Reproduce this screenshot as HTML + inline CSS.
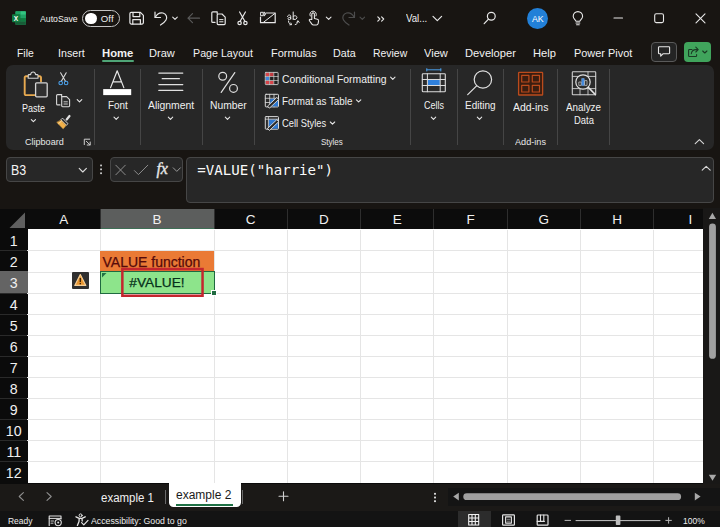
<!DOCTYPE html>
<html lang="en">
<head>
<meta charset="utf-8">
<title>Excel</title>
<style>
html,body{margin:0;padding:0;}
body{width:720px;height:527px;overflow:hidden;background:#181512;font-family:"Liberation Sans",sans-serif;color:#fff;position:relative;}
.abs{position:absolute;}
.t{position:absolute;white-space:nowrap;line-height:1;}
svg{position:absolute;overflow:visible;}
/* title bar */
#titlebar{left:0;top:0;width:720px;height:66px;background:#181512;}
.tab{position:absolute;top:46px;font-size:12.5px;color:#f2f2f2;white-space:nowrap;line-height:14px;}
/* ribbon */
#ribbon{left:6px;top:65px;width:708.3px;height:85px;background:#272727;border-radius:7px;}
.sep{position:absolute;top:69px;width:1px;height:76px;background:#454545;}
.rl{position:absolute;font-size:12px;color:#f0f0f0;white-space:nowrap;line-height:14px;}
.gl{position:absolute;font-size:10.5px;color:#e6e6e6;white-space:nowrap;line-height:12px;top:136px;}
/* formula bar */
.box{position:absolute;background:#272727;border:1px solid #464646;border-radius:4px;box-sizing:border-box;}
/* grid */
#grid{left:0;top:208.7px;width:703px;height:274.3px;background:#fff;overflow:hidden;}
.ch{position:absolute;top:0;height:20.6px;background:#0c0c0c;color:#f0f0f0;font-size:13.5px;line-height:21.5px;text-align:center;}
.rh{position:absolute;left:0;width:27.5px;background:#0c0c0c;color:#f0f0f0;font-size:14.2px;text-align:center;}
.hl{position:absolute;left:27px;width:680px;height:1px;background:#e5e5e5;}
.vl{position:absolute;top:21px;width:1px;height:260px;background:#e5e5e5;}
</style>
</head>
<body>
<div id="titlebar" class="abs"></div>

<!-- TITLE BAR CONTENT -->
<div id="tb">
<!-- excel logo -->
<svg style="left:0;top:0" width="40" height="36" viewBox="0 0 40 36">
  <rect x="15.5" y="11.3" width="10.3" height="13.6" rx="1" fill="#21a366"/>
  <rect x="15.5" y="11.3" width="5.2" height="3.5" fill="#21a366"/>
  <rect x="20.6" y="11.3" width="5.2" height="3.5" fill="#33c481"/>
  <rect x="15.5" y="14.7" width="5.2" height="3.5" fill="#107c41"/>
  <rect x="20.6" y="14.7" width="5.2" height="3.5" fill="#21a366"/>
  <rect x="15.5" y="18.1" width="5.2" height="3.5" fill="#185c37"/>
  <rect x="20.6" y="18.1" width="5.2" height="3.5" fill="#107c41"/>
  <rect x="15.5" y="21.5" width="10.3" height="3.4" fill="#185c37"/>
  <rect x="12" y="14.2" width="8" height="8" rx="0.8" fill="#107c41"/>
  <text x="16" y="20.6" font-family="Liberation Sans, sans-serif" font-size="6.6" font-weight="bold" fill="#fff" text-anchor="middle">X</text>
</svg>
<div class="t" style="left:39.5px;top:13.91px;font-size:9.6px;color:#f0f0f0;transform:scaleX(0.9060);transform-origin:0 50%;">AutoSave</div>
<div class="abs" style="left:82px;top:10px;width:37.6px;height:17.2px;border:1px solid #c4c4c4;border-radius:9px;box-sizing:border-box;background:#181512;"></div>
<div class="abs" style="left:85.2px;top:12.7px;width:11.8px;height:11.8px;border-radius:50%;background:#fff;"></div>
<div class="t" style="left:100.7px;top:13.71px;font-size:9.6px;color:#f0f0f0;letter-spacing:0.188px;">Off</div>
<!-- save -->
<svg style="left:0;top:0" width="720" height="36" viewBox="0 0 720 36" fill="none" stroke="#e8e8e8" stroke-width="1.2" stroke-linejoin="round" stroke-linecap="round">
  <path d="M131.2 12.4 H140.4 L143.4 15.4 V22.6 a1.5 1.5 0 0 1 -1.5 1.5 H131.4 a1.5 1.5 0 0 1 -1.5 -1.5 V13.7 a1.3 1.3 0 0 1 1.3 -1.3 Z"/>
  <path d="M133 12.6 V16.6 H139.8 V12.6"/>
  <path d="M132.8 24 V19.6 H140.4 V24"/>
  <!-- undo -->
  <path d="M155 12 V17.5 H160.5"/>
  <path d="M155.3 17.3 C157 14 160 12.3 163 13 C166.5 14 167.5 17.5 166 20 C165 21.8 163 23.5 160.5 25"/>
  <path d="M172.7 17.2 L175 19.4 L177.3 17.2" stroke-width="1.1"/>
  <!-- back arrow dim -->
  <g stroke="#5a5a5a"><path d="M188 18.2 H199.5 M192.5 13.7 L188 18.2 L192.5 22.7"/></g>
  <!-- copy/paste docs -->
  <path d="M215 22.4 H212.8 a1 1 0 0 1 -1 -1 V12.8 a1 1 0 0 1 1 -1 H217.2 V13.6"/>
  <path d="M218.2 14 H222 L225.2 17.2 V23.6 a1 1 0 0 1 -1 1 H218.2 a1 1 0 0 1 -1 -1 V15 a1 1 0 0 1 1 -1 Z"/>
  <path d="M219.6 19.6 H223 M219.6 21.8 H223" stroke-width="1"/>
  <!-- scissors -->
  <path d="M239.6 12 L245 21.5 M245.4 12 L240 21.5"/>
  <circle cx="239.6" cy="23" r="1.7"/><circle cx="245.4" cy="23" r="1.7"/>
  <!-- envelope -->
  <path d="M266 13 H275.2 V22.7 H260.5 V17"/>
  <path d="M274.8 13.5 L263.5 22.3" stroke-width="1"/>
  <path d="M261 12.3 h2.2 v3.4 h-2.2 z M264.2 12.3 c2 0 2 3.4 0 3.4 M264.2 12.3 v3.4" stroke-width="1"/>
  <!-- ab replace -->
  <path d="M287.5 16.5 c0.2 -2 3.2 -2 3.2 -0.2 v2.7 M290.7 17.3 c-3.5 0 -3.5 2.3 -1.5 2.3 c1 0 1.5 -0.6 1.5 -1.2" stroke-width="1"/>
  <path d="M293.2 12 v7.5 M293.2 16.3 c2.6 -1.6 4.2 0.3 3.6 1.8 c-0.6 1.6 -2.6 1.8 -3.6 0.8" stroke-width="1"/>
  <path d="M288.5 21 c0 2 1 3.3 2.8 3.6 M289.8 24.8 l1.7 -0.2 l-0.6 -1.6" stroke-width="1"/>
  <path d="M298 21 c0 2 -1 3.3 -2.8 3.6 M298 21 m-1.4 1.2 l1.4 -1.4 l1.2 1.5" stroke-width="1"/>
  <!-- touch -->
  <path d="M311.8 19.5 V14.2 a1.3 1.3 0 0 1 2.6 0 V18.5 l3 0.7 a1.6 1.6 0 0 1 1.2 1.7 l-0.5 2.7 a1.8 1.8 0 0 1 -1.8 1.4 h-2.7 a2 2 0 0 1 -1.7 -0.9 l-2.4 -3.4 a0.9 0.9 0 0 1 1.4 -1.2 Z" stroke-width="1.1"/>
  <path d="M310.2 16 a3.3 3.3 0 1 1 5.8 0" stroke-width="1"/>
  <path d="M326.3 17.2 L328.7 19.4 L331 17.2" stroke-width="1.1"/>
  <!-- redo dim -->
  <g stroke="#4d4d4d"><path d="M354.5 12 V17.5 H349"/><path d="M354.2 17.3 C352.5 14 349.5 12.3 346.5 13 C343 14 342 17.5 343.5 20 C344.5 21.8 346.5 23.5 349 25"/>
  <path d="M360 17.2 L362.3 19.4 L364.6 17.2" stroke-width="1.1"/></g>
  <!-- >> -->
  <path d="M377.8 16.8 L379.9 19 L377.8 21.2 M381.6 16.8 L383.7 19 L381.6 21.2" stroke-width="1.1"/>
  <!-- chevron after Val... -->
  <path d="M433 16.3 L437.3 20.6 L441.6 16.3" stroke-width="1.2"/>
  <!-- search -->
  <circle cx="491.3" cy="16.3" r="3.9"/><path d="M488.5 19.1 L484.2 23.7"/>
  <!-- bulb -->
  <path d="M575.9 21.2 c-0.3 -1.4 -2.7 -2.4 -2.7 -4.9 a4.7 4.7 0 0 1 9.4 0 c0 2.5 -2.4 3.5 -2.7 4.9 Z M576 23 h3.8 M576.6 24.8 h2.6" stroke-width="1.1"/>
  <!-- window controls -->
  <path d="M614 18 H622.5" stroke-width="1.1"/>
  <rect x="654.7" y="13.8" width="8.8" height="8.8" rx="1.6" stroke-width="1.1"/>
  <path d="M696 13.8 L705 22.8 M705 13.8 L696 22.8" stroke-width="1.1"/>
</svg>
<div class="t" style="left:405.7px;top:13.47px;font-size:10.5px;color:#f0f0f0;transform:scaleX(0.9198);transform-origin:0 50%;">Val...</div>
<div class="abs" style="left:527.4px;top:7.8px;width:20.9px;height:20.9px;border-radius:50%;background:#2280d8;"></div>
<div class="t" style="left:527.4px;width:20.9px;text-align:center;top:14.5px;font-size:8.8px;color:#fff;">AK</div>
</div>

<!-- TABS -->
<div id="tabs">
<div class="t" style="left:17.0px;top:47.74px;font-size:11.8px;color:#f2f2f2;transform:scaleX(0.8782);transform-origin:0 50%;">File</div>
<div class="t" style="left:57.5px;top:47.74px;font-size:11.8px;color:#f2f2f2;transform:scaleX(0.9046);transform-origin:0 50%;">Insert</div>
<div class="t" style="left:102.0px;top:47.74px;font-size:11.8px;color:#f2f2f2;transform:scaleX(0.9548);transform-origin:0 50%;font-weight:bold;">Home</div>
<div class="t" style="left:149.2px;top:47.74px;font-size:11.8px;color:#f2f2f2;transform:scaleX(0.9371);transform-origin:0 50%;">Draw</div>
<div class="t" style="left:192.5px;top:47.74px;font-size:11.8px;color:#f2f2f2;transform:scaleX(0.9057);transform-origin:0 50%;">Page Layout</div>
<div class="t" style="left:270.5px;top:47.74px;font-size:11.8px;color:#f2f2f2;transform:scaleX(0.9294);transform-origin:0 50%;">Formulas</div>
<div class="t" style="left:333.0px;top:47.74px;font-size:11.8px;color:#f2f2f2;transform:scaleX(0.9108);transform-origin:0 50%;">Data</div>
<div class="t" style="left:372.5px;top:47.74px;font-size:11.8px;color:#f2f2f2;transform:scaleX(0.8840);transform-origin:0 50%;">Review</div>
<div class="t" style="left:423.7px;top:47.74px;font-size:11.8px;color:#f2f2f2;transform:scaleX(0.9385);transform-origin:0 50%;">View</div>
<div class="t" style="left:464.5px;top:47.74px;font-size:11.8px;color:#f2f2f2;transform:scaleX(0.9483);transform-origin:0 50%;">Developer</div>
<div class="t" style="left:533.2px;top:47.74px;font-size:11.8px;color:#f2f2f2;transform:scaleX(0.9478);transform-origin:0 50%;">Help</div>
<div class="t" style="left:573.7px;top:47.74px;font-size:11.8px;color:#f2f2f2;transform:scaleX(0.9261);transform-origin:0 50%;">Power Pivot</div>
<div class="abs" style="left:102px;top:59.5px;width:31.5px;height:2px;background:#4fa577;border-radius:1px;"></div>
<div class="abs" style="left:651px;top:41.5px;width:26px;height:20px;border:1px solid #5a5a5a;border-radius:4px;box-sizing:border-box;background:#242424;"></div>
<div class="abs" style="left:684.3px;top:41.5px;width:26.4px;height:20.5px;border-radius:4px;background:#40a45c;"></div>
<svg style="left:0;top:36px" width="720" height="30" viewBox="0 36 720 30" fill="none" stroke-linejoin="round" stroke-linecap="round">
  <path d="M659.3 46.7 h9.5 a0.8 0.8 0 0 1 0.8 0.8 v5.4 a0.8 0.8 0 0 1 -0.8 0.8 h-5.6 l-2.5 2.4 v-2.4 h-1.4 a0.8 0.8 0 0 1 -0.8 -0.8 v-5.4 a0.8 0.8 0 0 1 0.8 -0.8 Z" stroke="#e8e8e8" stroke-width="1.1"/>
  <path d="M692 49.5 h-2.6 a0.8 0.8 0 0 0 -0.8 0.8 v5.4 a0.8 0.8 0 0 0 0.8 0.8 h6.4 a0.8 0.8 0 0 0 0.8 -0.8 v-1.2" stroke="#1a3a24" stroke-width="1.1"/>
  <path d="M691.3 53.8 c0.3 -2.6 2 -4.2 4.6 -4.2 h2 M695.8 47.2 l2.4 2.4 l-2.4 2.4" stroke="#1a3a24" stroke-width="1.1"/>
  <path d="M702.7 51 L704.8 53 L706.9 51" stroke="#1a3a24" stroke-width="1.1"/>
</svg>
</div>

<!-- RIBBON -->
<div id="ribbon" class="abs"></div>
<div id="rib">
<div class="sep" style="left:93.5px"></div>
<div class="sep" style="left:140px"></div>
<div class="sep" style="left:201.7px"></div>
<div class="sep" style="left:254px"></div>
<div class="sep" style="left:410px"></div>
<div class="sep" style="left:457.2px"></div>
<div class="sep" style="left:503px"></div>
<div class="sep" style="left:557.3px"></div>
<div class="sep" style="left:609.3px"></div>
<svg style="left:0;top:60px" width="720" height="96" viewBox="0 60 720 96" fill="none" stroke-linejoin="round" stroke-linecap="round">
  <!-- paste clipboard -->
  <path d="M28 76.3 H25.9 a1.2 1.2 0 0 0 -1.2 1.2 V93.9 a1.2 1.2 0 0 0 1.2 1.2 H34.6" stroke="#e8aa50" stroke-width="1.9"/>
  <path d="M38.4 76.3 H39.8 a1.2 1.2 0 0 1 1.2 1.2 V81.6" stroke="#e8aa50" stroke-width="1.9"/>
  <path d="M28.2 78.2 V75.4 a0.8 0.8 0 0 1 0.8 -0.8 H30.6 c0.2 -1.6 1 -2.6 2.5 -2.6 c1.5 0 2.3 1 2.5 2.6 H37.2 a0.8 0.8 0 0 1 0.8 0.8 V78.2 Z" stroke="#d6d6d6" stroke-width="1.1" fill="#272727"/>
  <rect x="35.6" y="82.8" width="11.6" height="14" rx="1" stroke="#d4d4d4" stroke-width="1.3" fill="#303030"/>
  <path d="M31.3 119.6 L33.4 121.6 L35.5 119.6" stroke="#e8e8e8" stroke-width="1.1"/>
  <!-- cut -->
  <path d="M60.6 72.8 L65.6 81.5 M66.2 72.8 L61.2 81.5" stroke="#d8d8d8" stroke-width="1.1"/>
  <circle cx="60.7" cy="83" r="1.8" stroke="#4a9fe8" stroke-width="1.1"/><circle cx="66.1" cy="83" r="1.8" stroke="#4a9fe8" stroke-width="1.1"/>
  <!-- copy -->
  <path d="M61.6 94.6 H57.6 a1 1 0 0 0 -1 1 V103.9 a1 1 0 0 0 1 1 H60" stroke="#d8d8d8" stroke-width="1.1"/>
  <path d="M61.6 94.6 V96.4" stroke="#d8d8d8" stroke-width="1.1"/>
  <path d="M62.6 96.6 H66.6 L69.6 99.6 V105.8 a0.9 0.9 0 0 1 -0.9 0.9 H62.6 a0.9 0.9 0 0 1 -0.9 -0.9 V97.5 a0.9 0.9 0 0 1 0.9 -0.9 Z" stroke="#d8d8d8" stroke-width="1.1" fill="#2c2c2c"/>
  <path d="M64 101.8 H67.4 M64 104 H67.4" stroke="#d8d8d8" stroke-width="0.9"/>
  <path d="M77.2 99.7 L79.5 101.9 L81.8 99.7" stroke="#e8e8e8" stroke-width="1.1"/>
  <!-- format painter -->
  <path d="M69.5 116 L66.7 119.5" stroke="#e0e0e0" stroke-width="2.2"/>
  <path d="M62.8 118.4 L68 123.6 L66.4 125.2 L61.2 120 Z" stroke="#e6e6e6" stroke-width="0.9" fill="#2a2a2a"/>
  <path d="M61 120.4 L66 125.4 L63.2 128.7 L57 122.6 Z" fill="#f0b04a" stroke="#f0b04a" stroke-width="0.6"/>
  <path d="M58.6 123.6 L61.6 120.9" stroke="#fbe3b4" stroke-width="0.8"/>
  <!-- dialog launcher -->
  <path d="M84.3 144.6 V139.2 H89.7 M86.3 141.2 L90 144.9 M90.2 142 V145 H87.2" stroke="#d0d0d0" stroke-width="1"/>
  <!-- Font A -->
  <path d="M110.6 87.6 L117.2 70.8 L123.8 87.6 M113 81.8 H121.4" stroke="#e8e8e8" stroke-width="1.2"/>
  <rect x="103.2" y="89.1" width="28" height="6" fill="#ffffff"/>
  <path d="M114 117.2 L116.2 119.3 L118.4 117.2" stroke="#e8e8e8" stroke-width="1.1"/>
  <!-- Alignment -->
  <path d="M158.8 73.1 H182.8 M162.2 78.7 H179.4 M158.8 84.6 H182.8 M158.8 90.4 H182.8" stroke="#e0e0e0" stroke-width="1.2"/>
  <path d="M168.3 117.2 L170.5 119.3 L172.7 117.2" stroke="#e8e8e8" stroke-width="1.1"/>
  <!-- percent -->
  <circle cx="222.7" cy="76.3" r="3.9" stroke="#e0e0e0" stroke-width="1.2"/>
  <circle cx="233.5" cy="88.4" r="3.9" stroke="#e0e0e0" stroke-width="1.2"/>
  <path d="M234.8 72.6 L221.2 92.4" stroke="#e0e0e0" stroke-width="1.2"/>
  <path d="M225.3 117.2 L227.5 119.3 L229.7 117.2" stroke="#e8e8e8" stroke-width="1.1"/>
  <!-- conditional formatting icon -->
  <rect x="265.3" y="72.4" width="12.8" height="12.2" rx="0.6" fill="#222" stroke="#d4d4d4" stroke-width="0.9"/>
  <rect x="265.8" y="72.9" width="3.6" height="3.4" fill="#d8444a"/>
  <rect x="269.8" y="72.9" width="3.8" height="3.4" fill="#c23a40"/>
  <rect x="265.8" y="76.8" width="3.6" height="3.5" fill="#3f86dc"/>
  <rect x="265.8" y="80.8" width="3.6" height="3.3" fill="#d8444a"/>
  <rect x="269.8" y="80.8" width="3.8" height="3.3" fill="#d8444a"/>
  <path d="M265.3 76.5 H278.1 M265.3 80.5 H278.1 M269.6 72.4 V84.6 M273.8 72.4 V84.6" stroke="#cfcfcf" stroke-width="0.7"/>
  <path d="M390.6 77.2 L392.8 79.3 L395 77.2" stroke="#e8e8e8" stroke-width="1.1"/>
  <!-- format as table icon -->
  <rect x="265.3" y="94.3" width="13.2" height="12.6" rx="0.8" fill="#2b2b2b" stroke="#d8d8d8" stroke-width="1"/>
  <path d="M265.3 98.3 H278.5 M265.3 102.5 H278.5 M269.7 94.3 V106.9 M274 94.3 V106.9" stroke="#d8d8d8" stroke-width="0.8"/>
  <rect x="270.2" y="98.8" width="7.8" height="7.6" fill="#2f78d0"/>
  <path d="M267.8 105.9 L276.8 97.4 L278.7 99.4 L269.7 107.9 Z" fill="#2b2b2b" stroke="#e0e0e0" stroke-width="0.9"/>
  <path d="M356.4 99.8 L358.6 101.9 L360.8 99.8" stroke="#e8e8e8" stroke-width="1.1"/>
  <!-- cell styles icon -->
  <rect x="265.3" y="116.6" width="13.2" height="12.6" rx="0.8" fill="#2b2b2b" stroke="#d8d8d8" stroke-width="1"/>
  <rect x="268.6" y="119.4" width="9.3" height="9.2" fill="#2f78d0"/><path d="M268.4 116.6 V129.2 M265.3 119.2 H278.5" stroke="#d8d8d8" stroke-width="0.8"/>
  <path d="M267.8 128.2 L276.8 119.7 L278.7 121.7 L269.7 130.2 Z" fill="#2b2b2b" stroke="#e0e0e0" stroke-width="0.9"/>
  <path d="M330.3 122 L332.5 124.1 L334.7 122" stroke="#e8e8e8" stroke-width="1.1"/>
  <!-- cells icon -->
  <path d="M426.8 69.8 H440.8 M426.8 68.6 V71 M440.8 68.6 V71" stroke="#4a9fe8" stroke-width="1"/>
  <rect x="422.3" y="73.8" width="23" height="18" rx="0.8" fill="#2b2b2b" stroke="#dcdcdc" stroke-width="1.1"/>
  <rect x="427.6" y="79.8" width="12.4" height="5.4" fill="#2f80dc"/>
  <path d="M422.3 79.5 H445.3 M422.3 85.5 H445.3 M427.4 73.8 V91.8 M440.2 73.8 V91.8" stroke="#dcdcdc" stroke-width="1"/>
  <path d="M431.3 117.2 L433.5 119.3 L435.7 117.2" stroke="#e8e8e8" stroke-width="1.1"/>
  <!-- editing icon -->
  <circle cx="482.9" cy="79.5" r="8.7" stroke="#e0e0e0" stroke-width="1.2"/>
  <path d="M476.6 85.8 L467.7 94.7" stroke="#e0e0e0" stroke-width="1.2"/>
  <path d="M477.3 117.2 L479.5 119.3 L481.7 117.2" stroke="#e8e8e8" stroke-width="1.1"/>
  <!-- add-ins icon -->
  <rect x="518.6" y="72.4" width="24" height="22.6" rx="0.6" fill="#3a1d10" stroke="#bb4b1c" stroke-width="1.3"/>
  <rect x="521.7" y="75.4" width="7.2" height="6.6" stroke="#bb4b1c" stroke-width="1.2"/>
  <rect x="532.3" y="75.4" width="7.2" height="6.6" stroke="#bb4b1c" stroke-width="1.2"/>
  <rect x="521.7" y="85.4" width="7.2" height="6.6" stroke="#bb4b1c" stroke-width="1.2"/>
  <rect x="532.3" y="85.4" width="7.2" height="6.6" stroke="#bb4b1c" stroke-width="1.2"/>
  <!-- analyze data icon -->
  <rect x="572.3" y="71.8" width="23.4" height="23" rx="0.6" fill="#2b2b2b" stroke="#cfcfcf" stroke-width="1.1"/>
  <path d="M572.3 76.4 H595.7 M572.3 88.6 H595.7 M580 88.6 V94.8 M588 71.8 V76.4 M588 88.6 V94.8" stroke="#cfcfcf" stroke-width="0.9"/>
  <circle cx="583" cy="82" r="7.2" fill="#2b2b2b" stroke="#e0e0e0" stroke-width="1.2"/>
  <rect x="579.2" y="82" width="2" height="3.4" fill="none" stroke="#d0d0d0" stroke-width="0.7"/>
  <rect x="582" y="78.6" width="2.2" height="6.8" fill="#3f86dc" stroke="#7ab0f0" stroke-width="0.6"/>
  <rect x="585" y="80.6" width="2" height="4.8" fill="none" stroke="#d0d0d0" stroke-width="0.7"/>
  <path d="M588.3 87.4 L595.4 94.6" stroke="#e0e0e0" stroke-width="1.5"/>
  <!-- collapse chevron -->
  <path d="M695.2 143.6 L699.4 139.6 L703.6 143.6" stroke="#d8d8d8" stroke-width="1.1"/>
</svg>
<div class="t" style="left:22.0px;top:102.97px;font-size:10.5px;color:#f4f4f4;transform:scaleX(0.8563);transform-origin:0 50%;">Paste</div>
<div class="t" style="left:25.0px;top:136.96px;font-size:9.5px;color:#e8e8e8;transform:scaleX(0.9515);transform-origin:0 50%;">Clipboard</div>
<div class="t" style="left:107.6px;top:100.47px;font-size:10.5px;color:#f0f0f0;transform:scaleX(0.9422);transform-origin:0 50%;">Font</div>
<div class="t" style="left:148.0px;top:100.47px;font-size:10.5px;color:#f0f0f0;transform:scaleX(0.9892);transform-origin:0 50%;">Alignment</div>
<div class="t" style="left:209.6px;top:100.47px;font-size:10.5px;color:#f0f0f0;transform:scaleX(0.9797);transform-origin:0 50%;">Number</div>
<div class="t" style="left:281.6px;top:73.67px;font-size:10.5px;color:#f0f0f0;transform:scaleX(0.9901);transform-origin:0 50%;">Conditional Formatting</div>
<div class="t" style="left:282.0px;top:96.07px;font-size:10.5px;color:#f0f0f0;transform:scaleX(0.9388);transform-origin:0 50%;">Format as Table</div>
<div class="t" style="left:282.0px;top:118.27px;font-size:10.5px;color:#f0f0f0;transform:scaleX(0.8910);transform-origin:0 50%;">Cell Styles</div>
<div class="t" style="left:321.2px;top:136.96px;font-size:9.5px;color:#e8e8e8;transform:scaleX(0.8425);transform-origin:0 50%;">Styles</div>
<div class="t" style="left:423.8px;top:100.47px;font-size:10.5px;color:#f0f0f0;transform:scaleX(0.8525);transform-origin:0 50%;">Cells</div>
<div class="t" style="left:464.5px;top:100.47px;font-size:10.5px;color:#f0f0f0;transform:scaleX(0.9499);transform-origin:0 50%;">Editing</div>
<div class="t" style="left:512.6px;top:101.57px;font-size:10.5px;color:#f0f0f0;transform:scaleX(0.9941);transform-origin:0 50%;">Add-ins</div>
<div class="t" style="left:514.5px;top:137.36px;font-size:9.5px;color:#e8e8e8;transform:scaleX(0.9622);transform-origin:0 50%;">Add-ins</div>
<div class="t" style="left:566.3px;top:101.57px;font-size:10.5px;color:#f0f0f0;transform:scaleX(0.9342);transform-origin:0 50%;">Analyze</div>
<div class="t" style="left:573.8px;top:115.47px;font-size:10.5px;color:#f0f0f0;transform:scaleX(0.8969);transform-origin:0 50%;">Data</div>
</div>

<!-- FORMULA BAR -->
<div id="fb">
<div class="box" style="left:5.5px;top:157px;width:87px;height:25px;"></div>
<div class="box" style="left:109.5px;top:157px;width:73.5px;height:25px;"></div>
<div class="box" style="left:186.3px;top:157px;width:527.7px;height:45.6px;"></div>
<div class="t" style="left:10.6px;top:163.26px;font-size:14.0px;color:#f4f4f4;transform:scaleX(0.8876);transform-origin:0 50%;">B3</div>
<svg style="left:0;top:150px" width="720" height="60" viewBox="0 150 720 60" fill="none" stroke-linejoin="round" stroke-linecap="round">
  <path d="M79.2 168.4 L82.8 172 L86.4 168.4" stroke="#dcdcdc" stroke-width="1.1"/>
  <rect x="100.2" y="164.6" width="1.7" height="1.7" fill="#d8d8d8"/><rect x="100.2" y="168.5" width="1.7" height="1.7" fill="#d8d8d8"/><rect x="100.2" y="172.4" width="1.7" height="1.7" fill="#d8d8d8"/>
  <path d="M115.8 165.2 L125.3 174.8 M125.3 165.2 L115.8 174.8" stroke="#8c8c8c" stroke-width="1"/>
  <path d="M134.4 170.6 L138.4 174.6 L147.8 165.2" stroke="#8c8c8c" stroke-width="1"/>
  <path d="M173.2 167.8 L176.8 171.4 L180.4 167.8" stroke="#9a9a9a" stroke-width="1"/>
  <path d="M702.2 170.2 L706.2 166.4 L710.2 170.2" stroke="#d8d8d8" stroke-width="1.1"/>
</svg>
<div class="t" style="left:156.4px;top:160.6px;font-family:'Liberation Serif',serif;font-style:italic;font-size:16px;color:#e8e8e8;letter-spacing:-0.2px;-webkit-text-stroke:0.35px #e8e8e8;">fx</div>
<div class="t" id="ftext" style="left:197.3px;top:163px;font-family:'DejaVu Sans Mono','Liberation Mono',monospace;font-size:14.1px;color:#fafafa;">=VALUE("harrie")</div>
</div>

<!-- GRID -->
<div id="grid" class="abs">
<div class="abs" style="left:0;top:0;width:703px;height:20.6px;background:#0b0b0b;"></div>
<svg style="left:0;top:0" width="28" height="22" viewBox="0 0 28 22"><path d="M25 3.5 V19 H9.5 Z" fill="#5f5f5f"/></svg>
<div class="ch" style="left:27.5px;width:72.5px;">A</div>
<div class="ch" style="left:100.0px;width:114.0px;background:#5c5e5d;border-bottom:1px solid #3f6e55;height:19.6px;">B</div>
<div class="abs" style="left:99.5px;top:0;width:1px;height:20.6px;background:#2e2e2e;"></div>
<div class="ch" style="left:214.0px;width:73.3px;">C</div>
<div class="abs" style="left:213.5px;top:0;width:1px;height:20.6px;background:#2e2e2e;"></div>
<div class="ch" style="left:287.3px;width:73.3px;">D</div>
<div class="abs" style="left:286.8px;top:0;width:1px;height:20.6px;background:#2e2e2e;"></div>
<div class="ch" style="left:360.6px;width:73.3px;">E</div>
<div class="abs" style="left:360.1px;top:0;width:1px;height:20.6px;background:#2e2e2e;"></div>
<div class="ch" style="left:433.9px;width:73.3px;">F</div>
<div class="abs" style="left:433.4px;top:0;width:1px;height:20.6px;background:#2e2e2e;"></div>
<div class="ch" style="left:507.2px;width:73.3px;">G</div>
<div class="abs" style="left:506.7px;top:0;width:1px;height:20.6px;background:#2e2e2e;"></div>
<div class="ch" style="left:580.5px;width:73.3px;">H</div>
<div class="abs" style="left:580.0px;top:0;width:1px;height:20.6px;background:#2e2e2e;"></div>
<div class="ch" style="left:653.8px;width:73.3px;">I</div>
<div class="abs" style="left:653.3px;top:0;width:1px;height:20.6px;background:#2e2e2e;"></div>
<div class="abs" style="left:0;top:20.6px;width:27.5px;height:260px;background:#0b0b0b;"></div>
<div class="rh" style="top:20.6px;height:21.1px;line-height:24.5px;background:transparent;">1</div>
<div class="abs" style="left:0;top:41.8px;width:27.5px;height:1px;background:#2a2a2a;"></div>
<div class="hl" style="top:41.8px"></div>
<div class="rh" style="top:41.7px;height:21.1px;line-height:24.5px;background:transparent;">2</div>
<div class="abs" style="left:0;top:62.9px;width:27.5px;height:1px;background:#2a2a2a;"></div>
<div class="hl" style="top:62.9px"></div>
<div class="rh" style="top:62.8px;height:21.1px;line-height:24.5px;background:#646464;">3</div>
<div class="abs" style="left:0;top:84.0px;width:27.5px;height:1px;background:#2a2a2a;"></div>
<div class="hl" style="top:84.0px"></div>
<div class="rh" style="top:83.9px;height:21.1px;line-height:24.5px;background:transparent;">4</div>
<div class="abs" style="left:0;top:105.1px;width:27.5px;height:1px;background:#2a2a2a;"></div>
<div class="hl" style="top:105.1px"></div>
<div class="rh" style="top:105.0px;height:21.1px;line-height:24.5px;background:transparent;">5</div>
<div class="abs" style="left:0;top:126.2px;width:27.5px;height:1px;background:#2a2a2a;"></div>
<div class="hl" style="top:126.2px"></div>
<div class="rh" style="top:126.1px;height:21.1px;line-height:24.5px;background:transparent;">6</div>
<div class="abs" style="left:0;top:147.3px;width:27.5px;height:1px;background:#2a2a2a;"></div>
<div class="hl" style="top:147.3px"></div>
<div class="rh" style="top:147.2px;height:21.1px;line-height:24.5px;background:transparent;">7</div>
<div class="abs" style="left:0;top:168.4px;width:27.5px;height:1px;background:#2a2a2a;"></div>
<div class="hl" style="top:168.4px"></div>
<div class="rh" style="top:168.3px;height:21.1px;line-height:24.5px;background:transparent;">8</div>
<div class="abs" style="left:0;top:189.5px;width:27.5px;height:1px;background:#2a2a2a;"></div>
<div class="hl" style="top:189.5px"></div>
<div class="rh" style="top:189.4px;height:21.1px;line-height:24.5px;background:transparent;">9</div>
<div class="abs" style="left:0;top:210.6px;width:27.5px;height:1px;background:#2a2a2a;"></div>
<div class="hl" style="top:210.6px"></div>
<div class="rh" style="top:210.5px;height:21.1px;line-height:24.5px;background:transparent;">10</div>
<div class="abs" style="left:0;top:231.7px;width:27.5px;height:1px;background:#2a2a2a;"></div>
<div class="hl" style="top:231.7px"></div>
<div class="rh" style="top:231.6px;height:21.1px;line-height:24.5px;background:transparent;">11</div>
<div class="abs" style="left:0;top:252.8px;width:27.5px;height:1px;background:#2a2a2a;"></div>
<div class="hl" style="top:252.8px"></div>
<div class="rh" style="top:252.7px;height:21.1px;line-height:24.5px;background:transparent;">12</div>
<div class="abs" style="left:0;top:273.9px;width:27.5px;height:1px;background:#2a2a2a;"></div>
<div class="hl" style="top:273.9px"></div>
<div class="vl" style="left:99.5px"></div>
<div class="vl" style="left:213.5px"></div>
<div class="vl" style="left:286.8px"></div>
<div class="vl" style="left:360.1px"></div>
<div class="vl" style="left:433.4px"></div>
<div class="vl" style="left:506.7px"></div>
<div class="vl" style="left:580.0px"></div>
<div class="vl" style="left:653.3px"></div>
<div class="abs" style="left:100px;top:42.3px;width:114px;height:20.9px;background:#ea7a35;"></div>
<div class="t" id="c_b2" style="left:102.5px;top:46.2px;font-size:14px;color:#560a0a;-webkit-text-stroke:0.25px #560a0a;">VALUE function</div>
<div class="abs" style="left:99.5px;top:62.3px;width:115px;height:22.6px;background:#8de48b;border:1px solid #1f6a40;box-sizing:border-box;"></div>
<svg style="left:101.5px;top:64.3px" width="5" height="5" viewBox="0 0 5 5"><path d="M0 0H4.5L0 4.5Z" fill="#1f7145"/></svg>
<div class="t" id="c_b3" style="left:100px;width:114px;text-align:center;top:67.3px;font-size:13.7px;color:#06301a;-webkit-text-stroke:0.25px #06301a;">#VALUE!</div>
<div class="abs" style="left:210.5px;top:81.4px;width:4px;height:4px;background:#1f6a40;border:1px solid #fff;"></div>
<svg style="left:0;top:0" width="703" height="275"><rect x="122.35" y="60.05" width="80.2" height="26.7" fill="none" stroke="#c4262e" stroke-width="2.5"/></svg>
<div class="abs" style="left:72.2px;top:63.5px;width:16.6px;height:16.6px;background:#303030;border-radius:1px;"></div>
<svg style="left:72.2px;top:63.5px" width="17" height="17" viewBox="0 0 17 17"><path d="M8.3 2.6 L13.8 13.4 H2.8 Z" fill="#e8952f" stroke="#f5cf98" stroke-width="1.2" stroke-linejoin="round"/><rect x="7.6" y="6" width="1.4" height="4" fill="#3a2408"/><rect x="7.6" y="10.9" width="1.4" height="1.4" fill="#3a2408"/></svg>
</div>

<!-- SHEET TABS -->
<div id="sheetbar">
<div class="abs" style="left:0;top:483px;width:720px;height:28px;background:#1b1917;"></div>
<div class="abs" style="left:0;top:483px;width:703px;height:1px;background:#0b0b0b;"></div>
<div class="abs" style="left:448px;top:487.5px;width:272px;height:18.5px;background:#141414;"></div>
<div class="abs" style="left:703px;top:208px;width:17px;height:276px;background:#191817;"></div>
<div class="abs" style="left:169px;top:482.8px;width:71.5px;height:23.8px;background:#fff;border-radius:0 0 4.5px 4.5px;"></div>
<div class="abs" style="left:176px;top:503.6px;width:56.5px;height:2px;background:#1e7145;"></div>
<div class="abs" style="left:165.3px;top:489.7px;width:1px;height:14.7px;background:#6a6a6a;"></div>
<div class="abs" style="left:242.2px;top:489.7px;width:1px;height:14.7px;background:#6a6a6a;"></div>
<div class="t" style="left:100.6px;top:491.89px;font-size:12.3px;color:#f0f0f0;transform:scaleX(0.9339);transform-origin:0 50%;">example 1</div>
<div class="t" style="left:176.2px;top:488.59px;font-size:12.3px;color:#1a1a1a;transform:scaleX(0.9762);transform-origin:0 50%;">example 2</div>
<svg style="left:0;top:480px" width="720" height="47" viewBox="0 480 720 47" fill="none" stroke-linejoin="round" stroke-linecap="round">
  <path d="M23.4 492.6 L19.2 496.5 L23.4 500.4" stroke="#8f8f8f" stroke-width="1.1"/>
  <path d="M47 492.6 L51.2 496.5 L47 500.4" stroke="#8f8f8f" stroke-width="1.1"/>
  <path d="M279 496.3 H288 M283.5 491.8 V500.8" stroke="#d0d0d0" stroke-width="1.1"/>
  <rect x="434.1" y="492.9" width="1.8" height="1.8" fill="#e8e8e8"/><rect x="434.1" y="496.6" width="1.8" height="1.8" fill="#e8e8e8"/><rect x="434.1" y="500.3" width="1.8" height="1.8" fill="#e8e8e8"/>
  <path d="M458.8 492.8 V500.4 L453.2 496.6 Z" fill="#a8a8a8"/>
  <rect x="463.3" y="493.2" width="217.8" height="6.9" rx="3.45" fill="#a0a0a0"/>
  <path d="M694.8 492.8 V500.4 L700.6 496.6 Z" fill="#a8a8a8"/>
  <!-- vertical scrollbar -->
</svg>
<svg style="left:700px;top:208px" width="20" height="276" viewBox="700 208 20 276">
  <path d="M708.8 219 H716 L712.4 212.8 Z" fill="#a8a8a8"/>
  <rect x="709.1" y="223.4" width="6.8" height="135.4" rx="3.4" fill="#a0a0a0"/>
  <path d="M708.8 474.8 H716.2 L712.5 480.8 Z" fill="#a8a8a8"/>
</svg>
</div>

<!-- STATUS -->
<div id="status">
<div class="abs" style="left:0;top:511px;width:720px;height:16px;background:#131313;"></div>
<div class="abs" style="left:457.5px;top:511px;width:33px;height:16px;background:#2c2c2c;"></div>
<div class="t" style="left:8.4px;top:515.86px;font-size:9.7px;color:#ededed;transform:scaleX(0.8709);transform-origin:0 50%;">Ready</div>
<div class="t" style="left:91.2px;top:515.86px;font-size:9.7px;color:#ededed;transform:scaleX(0.9031);transform-origin:0 50%;">Accessibility: Good to go</div>
<div class="t" style="left:683.3px;top:515.86px;font-size:9.7px;color:#ededed;transform:scaleX(0.8757);transform-origin:0 50%;">100%</div>
<svg style="left:0;top:507px" width="720" height="20" viewBox="0 507 720 20" fill="none" stroke-linejoin="round" stroke-linecap="round">
  <!-- macro record icon -->
  <path d="M49.2 525.4 V516 H61 V519" stroke="#e0e0e0" stroke-width="1.1"/>
  <path d="M49.2 518.4 H61" stroke="#e0e0e0" stroke-width="1"/>
  <path d="M51 521 H53.5 M51 523.2 H53" stroke="#e0e0e0" stroke-width="0.9"/>
  <circle cx="58.2" cy="522.6" r="3.1" stroke="#e0e0e0" stroke-width="1.1"/>
  <circle cx="58.2" cy="522.6" r="1" fill="#e0e0e0"/>
  <!-- accessibility icon -->
  <circle cx="80.6" cy="515.4" r="1.5" stroke="#e4e4e4" stroke-width="1"/>
  <path d="M76 516.8 L79.2 518.4 H82 L85.2 516.8 M79.2 518.4 L79 521.6 L77.4 525.4 M82 518.4 L82.2 521" stroke="#e4e4e4" stroke-width="1.3"/>
  <path d="M81.6 522.6 L83.8 524.8 L88 520.4" stroke="#e4e4e4" stroke-width="1.2"/>
  <!-- normal view -->
  <path d="M468.7 514.5 H478.7 V525 H468.7 Z M468.7 518 H478.7 M468.7 521.5 H478.7 M472 514.5 V525 M475.3 514.5 V525" stroke="#f0f0f0" stroke-width="1.1"/>
  <!-- page layout -->
  <rect x="502.6" y="514.8" width="11.8" height="10.4" rx="0.8" stroke="#e4e4e4" stroke-width="1.2"/>
  <rect x="505.6" y="516.9" width="5.8" height="6.2" stroke="#e4e4e4" stroke-width="1.1"/>
  <path d="M507 519.3 H510 M507 521.2 H510" stroke="#a8a8a8" stroke-width="0.8"/>
  <!-- page break -->
  <rect x="537.2" y="515" width="10.8" height="10.2" rx="0.8" stroke="#e4e4e4" stroke-width="1.2"/>
  <path d="M540.5 515 V521.2 M543.8 515 V521.2 M537.2 521.4 H544.4" stroke="#e4e4e4" stroke-width="1.1"/>
  <!-- zoom -->
  <path d="M565 520.4 H570.6" stroke="#b8b8b8" stroke-width="1"/>
  <path d="M576 520.6 H660" stroke="#c8c8c8" stroke-width="1"/>
  <rect x="615.8" y="515.6" width="4.6" height="9.4" rx="0.8" fill="#bdbdbd"/>
  <path d="M665.8 520.4 H671.4 M668.6 517.6 V523.2" stroke="#b8b8b8" stroke-width="1"/>
</svg>
</div>
</body>
</html>
